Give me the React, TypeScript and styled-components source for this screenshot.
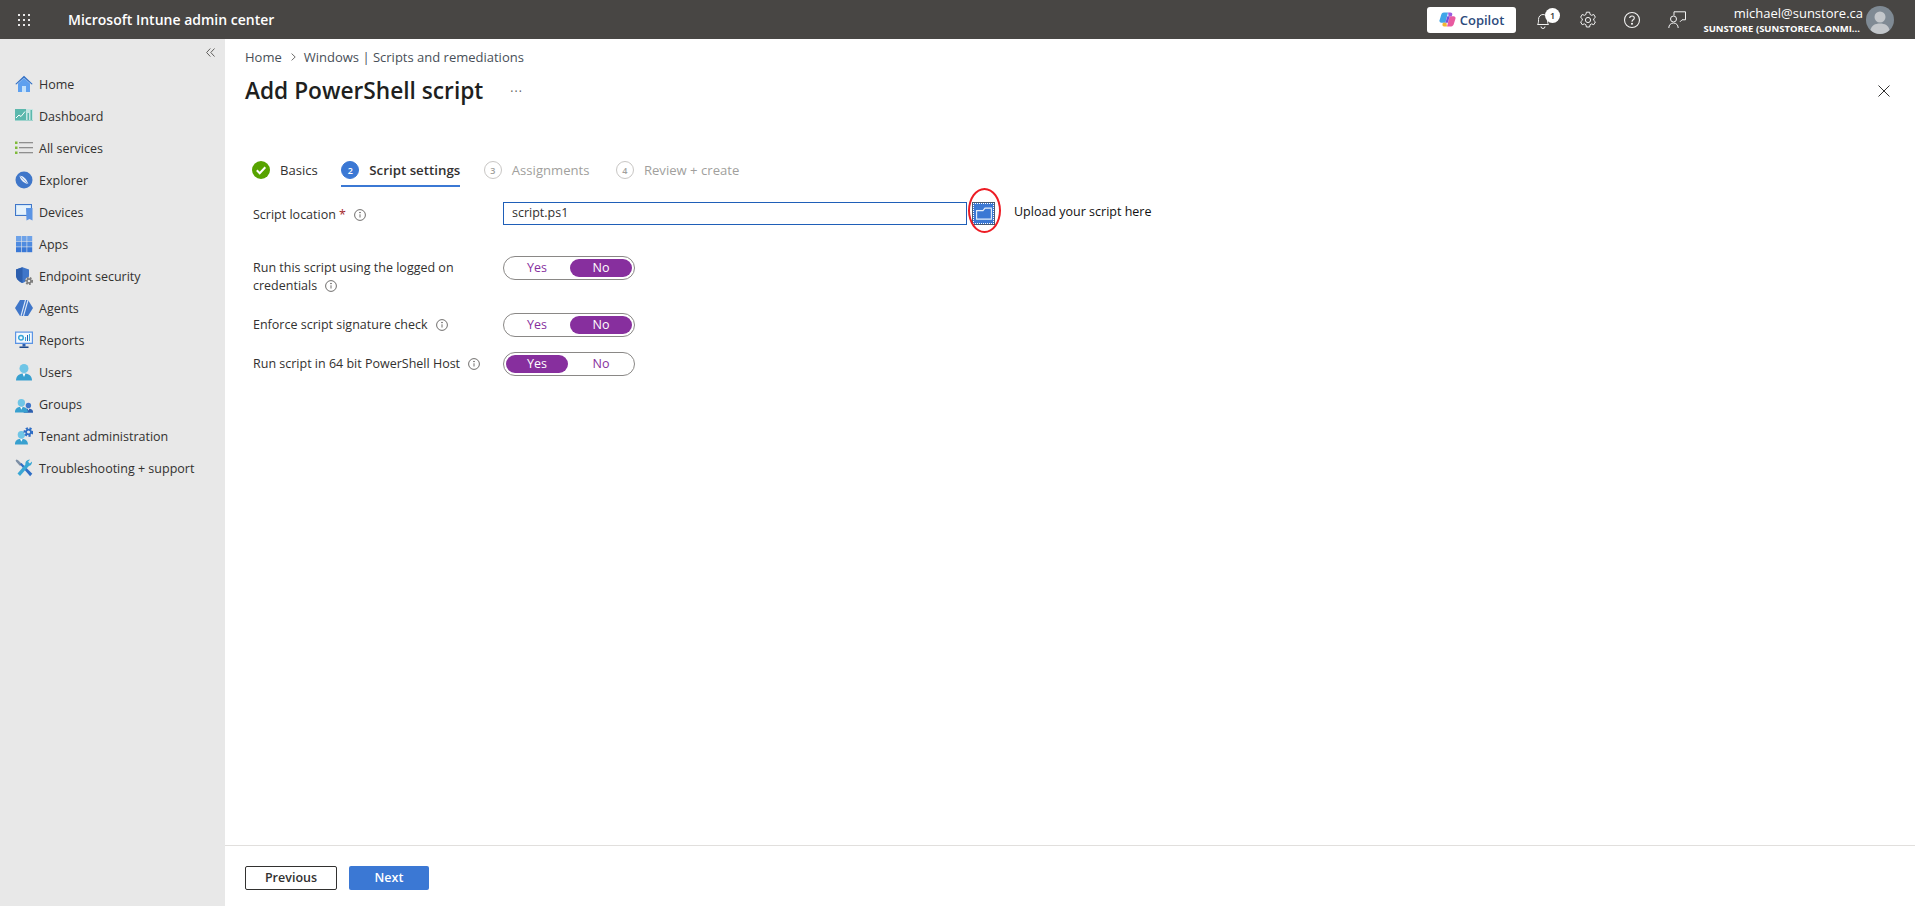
import React from "react";
import styled, { createGlobalStyle } from "styled-components";

const FONT = `"Open Sans", "Noto Sans", "Liberation Sans", sans-serif`;

const GlobalStyle = createGlobalStyle`
    html, body {
        margin: 0;
        padding: 0;
        background: #ffffff;
    }
    * {
        box-sizing: border-box;
    }
`;

// --- icons ---
const Waffle = () => (
    <svg width="12" height="12" viewBox="0 0 12 12" fill="#e8e8e8">
        {[0, 5, 10].map((y) =>
            [0, 5, 10].map((x) => <rect key={`${x}-${y}`} x={x} y={y} width="2" height="2" />)
        )}
    </svg>
);

const HomeIcon = () => (
    <svg width="18" height="18" viewBox="0 0 18 18">
        <path d="M3 8.500 9 3l6 5.500V17H3z" fill="#5ea0ef" />
        <rect x="7" y="11" width="4" height="6" fill="#c3e1fb" />
        <path d="M.3 9 9 .8 17.700 9l-1 .6L9 2.800 1.300 9.600z" fill="#2f6ec5" />
    </svg>
);

const DashboardIcon = () => (
    <svg width="18" height="18" viewBox="0 0 18 18">
        <rect x="0" y="2" width="18" height="12" fill="#c7e6e3" />
        <rect x="0" y="2" width="11" height="11" fill="#5cb8ad" />
        <path d="M1 11l3-3 2 1.500L10 4.500" stroke="#fff" strokeWidth="1" fill="none" />
        <rect x="12.500" y="6" width="1.500" height="7" fill="#5cb8ad" />
        <rect x="15.500" y="3" width="1.500" height="10" fill="#5cb8ad" />
        <rect x="0" y="13" width="18" height="1" fill="#9fd3cd" />
    </svg>
);

const ServicesIcon = () => (
    <svg width="18" height="18" viewBox="0 0 18 18">
        {[2.500, 7.500, 12.500].map((y) => (
            <React.Fragment key={y}>
                <rect x="0" y={y} width="2.500" height="2.500" fill="#7fba3a" />
                <rect x="4" y={y + 0.500} width="14" height="1.300" fill="#8f8f8f" />
            </React.Fragment>
        ))}
    </svg>
);

const ExplorerIcon = () => (
    <svg width="18" height="18" viewBox="0 0 18 18">
        <circle cx="9" cy="9" r="8.500" fill="#3f76c9" />
        <path d="M4.500 4.800c3-.5 7 2.500 8.800 8.200-3.500-.3-7.800-3-8.800-8.200z" fill="#e6edf7" />
        <path d="M5 5l8 8" stroke="#7fa3dc" strokeWidth=".8" />
    </svg>
);

const DevicesIcon = () => (
    <svg width="18" height="18" viewBox="0 0 18 18">
        <rect x="0.500" y="1.500" width="16" height="11" fill="#cfe6f8" stroke="#3f76c9" />
        <rect x="2" y="3" width="13" height="8" fill="#e6f2fb" />
        <path d="M11 5h6.500v12.500l-3-1.500-3 1.500z" fill="#5b94e4" />
    </svg>
);

const AppsIcon = () => (
    <svg width="18" height="18" viewBox="0 0 18 18">
        {[1, 6.600, 12.200].map((y, r) =>
            [1, 6.600, 12.200].map((x) => (
                <rect
                    key={`${x}-${y}`}
                    x={x}
                    y={y}
                    width="5"
                    height="5"
                    fill={r === 0 ? "#6ea2e8" : r === 1 ? "#4f8be0" : "#3a78d6"}
                />
            ))
        )}
    </svg>
);

const GearBadge = ({ x, y, r, color }: { x: number; y: number; r: number; color: string }) => (
    <g>
        <circle cx={x} cy={y} r={r} fill="none" stroke={color} strokeWidth={r * 0.9} strokeDasharray={`${r * 0.55} ${r * 0.42}`} />
        <circle cx={x} cy={y} r={r * 0.72} fill="none" stroke={color} strokeWidth={r * 0.5} />
    </g>
);

const EndpointIcon = () => (
    <svg width="18" height="18" viewBox="0 0 18 18">
        <path d="M7.500.2 1 2.500V8c0 4 2.800 6.500 6.500 8 3.700-1.500 6.500-4 6.500-8V2.500z" fill="#3f76c9" />
        <path d="M7.500.2V16C3.800 14.500 1 12 1 8V2.500z" fill="#2d5fae" />
        <circle cx="14" cy="14" r="3.800" fill="#e8e8e8" />
        <GearBadge x={14} y={14} r={2.800} color="#7d7d7d" />
    </svg>
);

const AgentsIcon = () => (
    <svg width="18" height="18" viewBox="0 0 18 18">
        <path d="M5 1h8l5 8-5 8H5L0 9z" fill="#3f76c9" />
        <path d="M10.500 1 6 17M13 1 8.500 17" stroke="#dce8f8" strokeWidth="1.100" />
    </svg>
);

const ReportsIcon = () => (
    <svg width="18" height="18" viewBox="0 0 18 18">
        <rect x="0" y="0.500" width="18" height="12.500" fill="#5b94e4" />
        <rect x="1.200" y="1.700" width="15.600" height="10" fill="#f3f8fd" />
        <circle cx="6" cy="6.700" r="2.300" fill="none" stroke="#39a6d8" strokeWidth="1.500" />
        <rect x="10" y="6" width="1" height="4" fill="#39a6d8" />
        <rect x="12" y="4" width="1" height="6" fill="#2d5fae" />
        <rect x="14" y="3" width="1" height="7" fill="#39a6d8" />
        <rect x="7.500" y="13" width="3" height="2.500" fill="#2d5fae" />
        <rect x="4.500" y="15.500" width="9" height="1.500" fill="#1f4a8c" />
    </svg>
);

const PersonShape = ({ dx = 0, s = 1, a = "#6fc5e6", b = "#38a0cf" }: { dx?: number; s?: number; a?: string; b?: string }) => (
    <g transform={`translate(${dx} ${18 - 18 * s}) scale(${s})`}>
        <circle cx="9" cy="5.500" r="4.500" fill={a} />
        <path d="M1 17.500c0-4.500 3.200-7 8-7s8 2.500 8 7z" fill={b} />
        <path d="M7.500 10.600h3L9 14z" fill="#ffffff" />
    </g>
);

const UsersIcon = () => (
    <svg width="18" height="18" viewBox="0 0 18 18">
        <PersonShape />
    </svg>
);

const GroupsIcon = () => (
    <svg width="18" height="18" viewBox="0 0 18 18">
        <PersonShape dx={8} s={0.6} a="#3f76c9" b="#2d5fae" />
        <PersonShape dx={-1} s={0.82} />
    </svg>
);

const TenantIcon = () => (
    <svg width="18" height="18" viewBox="0 0 18 18">
        <PersonShape dx={-1} s={0.82} />
        <circle cx="13.500" cy="5" r="4.500" fill="#e8e8e8" />
        <GearBadge x={13.500} y={5} r={3.400} color="#2f6ec5" />
    </svg>
);

const ToolsIcon = () => (
    <svg width="18" height="18" viewBox="0 0 18 18">
        <path d="M5 7 1.200 2.800.6 1.300 1.600.5l1.500.7L7 5z" fill="#7d8fa5" />
        <path d="M5 5.500 6.500 4l10.800 10.800-2.200 2.500z" fill="#2f6ec5" />
        <path d="M2.500 14.500 5 17 13.800 7 11.300 4.500z" fill="#3aa7d4" />
        <path d="M10.500 5.500c-.6-2.600 1.300-4.900 4.600-5l-2 2.300 1.700 1.700L17 2.500c.2 3.200-2.300 5.200-5 4.600z" fill="#3aa7d4" />
    </svg>
);

const BellIcon = () => (
    <svg width="16" height="18" viewBox="0 0 16 18" fill="none" stroke="#f2f2f2" strokeWidth="1">
        <path d="M2.500 13.500c1-1.300 1-2.500 1-5 0-3 2-5 4.500-5s4.500 2 4.500 5c0 2.500 0 3.700 1 5z" />
        <path d="M6 15.500a2 2 0 0 0 4 0" />
    </svg>
);

const GearIcon = () => (
    <svg width="18" height="18" viewBox="0 0 18 18" fill="none" stroke="#f2f2f2" strokeWidth="1">
        <path d="M7.400 1.200h3.200l.5 2.300 1.500.8 2.200-.8 1.600 2.800-1.700 1.500v1.500l1.700 1.600-1.600 2.800-2.200-.8-1.500.8-.5 2.300H7.400l-.5-2.300-1.500-.8-2.200.8-1.600-2.800 1.700-1.600V7.800L1.600 6.300l1.600-2.800 2.200.8 1.500-.8z" />
        <circle cx="9" cy="9" r="2.600" />
    </svg>
);

const HelpIcon = () => (
    <svg width="18" height="18" viewBox="0 0 18 18" fill="none" stroke="#f2f2f2" strokeWidth="1.100">
        <circle cx="9" cy="9" r="7.500" />
        <path d="M6.700 7.100c0-1.300 1-2.100 2.300-2.100s2.300.9 2.300 2c0 1.900-2.300 1.700-2.300 3.700" />
        <circle cx="9" cy="12.800" r=".5" fill="#f2f2f2" />
    </svg>
);

const FeedbackIcon = () => (
    <svg width="18" height="18" viewBox="0 0 18 18" fill="none" stroke="#f2f2f2" strokeWidth="1">
        <path d="M6 4.500V.8h11.500v8h-3.500l-2 2" />
        <circle cx="5.500" cy="8" r="3" />
        <path d="M.8 17c0-3 2-5 4.700-5s4.700 2 4.700 5" />
    </svg>
);

const CopilotLogo = () => (
    <svg width="17" height="17" viewBox="0 0 16 16">
        <path d="M4.500 1.500h4L6 11H2.200C1 11 .2 10 .5 8.800l1.600-5.300C2.500 2.300 3.400 1.500 4.500 1.500z" fill="#3fa5e8" />
        <path d="M11.500 14.500h-4l2.500-9.500h3.800c1.200 0 2 1 1.700 2.200l-1.600 5.300c-.4 1.200-1.300 2-2.400 2z" fill="#e85aa0" />
        <path d="M8.500 1.500h2.200c1.200 0 2 .9 1.800 2L12 5H9z" fill="#9a5ce0" />
        <path d="M7.500 14.500H4.800c-1.200 0-1.800-1-1.500-2l.4-1.500H7z" fill="#f2b632" />
        <path d="M6 11l1.800-6h2.300L8.300 11z" fill="#7b4fd6" />
    </svg>
);

const AvatarIcon = () => (
    <svg width="28" height="28" viewBox="0 0 28 28">
        <circle cx="14" cy="14" r="14" fill="#7f8a94" />
        <circle cx="14" cy="11" r="5.500" fill="#c3c7cb" />
        <path d="M4.500 24c1-4.500 4.500-6.500 9.500-6.500s8.500 2 9.500 6.500c-2.500 2.500-6 4-9.500 4s-7-1.500-9.500-4z" fill="#c3c7cb" />
    </svg>
);

const InfoIcon = () => (
    <InfoSvg width="12" height="12" viewBox="0 0 12 12" fill="none" stroke="#605e5c" strokeWidth=".9">
        <circle cx="6" cy="6" r="5.400" />
        <path d="M6 5.300v3.200" />
        <circle cx="6" cy="3.600" r=".4" fill="#605e5c" />
    </InfoSvg>
);

const CheckBadge = () => (
    <svg width="18" height="18" viewBox="0 0 18 18">
        <circle cx="9" cy="9" r="9" fill="#57a300" />
        <path d="M4.800 9.300 7.700 12.200 13.300 6.200" stroke="#fff" strokeWidth="2" fill="none" />
    </svg>
);

const FolderIcon = () => (
    <svg width="16" height="13" viewBox="0 0 16 13" fill="none" stroke="#e4eefb" strokeWidth="1.100">
        <path d="M.6 3.600h6.400l2-2.500h6.400v11H.6z" />
    </svg>
);

const CloseIcon = () => (
    <svg width="12" height="12" viewBox="0 0 12 12" stroke="#323130" strokeWidth="1">
        <path d="M.5.500l11 11M11.500.500l-11 11" />
    </svg>
);

const ChevronsIcon = () => (
    <svg width="9" height="9" viewBox="0 0 9 9" fill="none" stroke="#605e5c" strokeWidth="1">
        <path d="M4.300.5.600 4.500l3.700 4M8.500.5 4.800 4.500l3.700 4" />
    </svg>
);

const CrumbChevron = () => (
    <svg width="5" height="8" viewBox="0 0 5 8" fill="none" stroke="#605e5c" strokeWidth=".9">
        <path d="M.6.6 4.200 4 .6 7.400" />
    </svg>
);

const NAV_ITEMS: { label: string; icon: React.ReactNode }[] = [
    { label: "Home", icon: <HomeIcon /> },
    { label: "Dashboard", icon: <DashboardIcon /> },
    { label: "All services", icon: <ServicesIcon /> },
    { label: "Explorer", icon: <ExplorerIcon /> },
    { label: "Devices", icon: <DevicesIcon /> },
    { label: "Apps", icon: <AppsIcon /> },
    { label: "Endpoint security", icon: <EndpointIcon /> },
    { label: "Agents", icon: <AgentsIcon /> },
    { label: "Reports", icon: <ReportsIcon /> },
    { label: "Users", icon: <UsersIcon /> },
    { label: "Groups", icon: <GroupsIcon /> },
    { label: "Tenant administration", icon: <TenantIcon /> },
    { label: "Troubleshooting + support", icon: <ToolsIcon /> },
];

const Toggle: React.FC<{ value: "Yes" | "No" }> = ({ value }) => (
    <ToggleBox>
        <ToggleOption $on={value === "Yes"}>Yes</ToggleOption>
        <ToggleOption $on={value === "No"}>No</ToggleOption>
    </ToggleBox>
);

export default function App() {
    return (
        <Page>
            <GlobalStyle />
            <TopBar>
                <WaffleButton>
                    <Waffle />
                </WaffleButton>
                <BrandName>Microsoft Intune admin center</BrandName>
                <TopRight>
                    <CopilotButton>
                        <CopilotLogo />
                        Copilot
                    </CopilotButton>
                    <TopIconButton>
                        <BellIcon />
                        <NoticeBadge>1</NoticeBadge>
                    </TopIconButton>
                    <TopIconButton>
                        <GearIcon />
                    </TopIconButton>
                    <TopIconButton>
                        <HelpIcon />
                    </TopIconButton>
                    <TopIconButton>
                        <FeedbackIcon />
                    </TopIconButton>
                    <Account>
                        <AccountMail>michael@sunstore.ca</AccountMail>
                        <AccountTenant>SUNSTORE (SUNSTORECA.ONMI...</AccountTenant>
                    </Account>
                    <AvatarIcon />
                </TopRight>
            </TopBar>
            <Body>
                <Sidebar>
                    <CollapseRow>
                        <ChevronsIcon />
                    </CollapseRow>
                    {NAV_ITEMS.map((item) => (
                        <NavItem key={item.label}>
                            {item.icon}
                            {item.label}
                        </NavItem>
                    ))}
                </Sidebar>
                <Main>
                    <Content>
                        <Breadcrumb>
                            Home
                            <CrumbGap>
                                <CrumbChevron />
                            </CrumbGap>
                            Windows | Scripts and remediations
                        </Breadcrumb>
                        <TitleRow>
                            <Title>Add PowerShell script</Title>
                            <MoreDots>···</MoreDots>
                            <CloseButton>
                                <CloseIcon />
                            </CloseButton>
                        </TitleRow>
                        <Tabs>
                            <Tab>
                                <CheckBadge />
                                Basics
                            </Tab>
                            <Tab $active>
                                <StepNumber $active>2</StepNumber>
                                Script settings
                            </Tab>
                            <Tab $disabled>
                                <StepNumber>3</StepNumber>
                                Assignments
                            </Tab>
                            <Tab $disabled $pushed>
                                <StepNumber>4</StepNumber>
                                Review + create
                            </Tab>
                        </Tabs>
                        <Form>
                            <FormRow $gapBelow={15}>
                                <FieldLabel $nudged>
                                    Script location <Required>*</Required>
                                    <InfoSlot>
                                        <InfoIcon />
                                    </InfoSlot>
                                </FieldLabel>
                                <FileRow>
                                    <FileInput>script.ps1</FileInput>
                                    <FolderSpot>
                                        <FolderButton>
                                            <FolderIcon />
                                        </FolderButton>
                                        <RedCircle />
                                    </FolderSpot>
                                    <UploadNote>Upload your script here</UploadNote>
                                </FileRow>
                            </FormRow>
                            <FormRow>
                                <FieldLabel>
                                    Run this script using the logged on credentials
                                    <InfoSlot>
                                        <InfoIcon />
                                    </InfoSlot>
                                </FieldLabel>
                                <Toggle value="No" />
                            </FormRow>
                            <FormRow>
                                <FieldLabel>
                                    Enforce script signature check
                                    <InfoSlot>
                                        <InfoIcon />
                                    </InfoSlot>
                                </FieldLabel>
                                <Toggle value="No" />
                            </FormRow>
                            <FormRow>
                                <FieldLabel>
                                    Run script in 64 bit PowerShell Host
                                    <InfoSlot>
                                        <InfoIcon />
                                    </InfoSlot>
                                </FieldLabel>
                                <Toggle value="Yes" />
                            </FormRow>
                        </Form>
                    </Content>
                    <Footer>
                        <PreviousButton>Previous</PreviousButton>
                        <NextButton>Next</NextButton>
                    </Footer>
                </Main>
            </Body>
        </Page>
    );
}

// --- styles ---
const Page = styled.div`
    display: flex;
    flex-direction: column;
    height: 906px;
    overflow: hidden;
    font-family: ${FONT};
    font-size: 12.5px;
    color: #323130;
`;

const TopBar = styled.header`
    display: flex;
    align-items: center;
    flex: 0 0 39px;
    padding-right: 21px;
    background: #484644;
    color: #ffffff;
`;

const WaffleButton = styled.div`
    display: flex;
    align-items: center;
    justify-content: center;
    width: 48px;
`;

const BrandName = styled.div`
    margin-left: 20px;
    font-size: 14px;
    font-weight: 600;
`;

const TopRight = styled.div`
    display: flex;
    align-items: center;
    margin-left: auto;
`;

const CopilotButton = styled.div`
    display: flex;
    align-items: center;
    justify-content: center;
    gap: 4px;
    width: 89px;
    height: 26px;
    margin-right: 5px;
    border-radius: 3px;
    background: #ffffff;
    color: #2c4a7c;
    font-size: 13px;
    font-weight: 600;
`;

const TopIconButton = styled.div`
    position: relative;
    display: flex;
    align-items: center;
    justify-content: center;
    width: 44.5px;
    height: 39px;
`;

const NoticeBadge = styled.span`
    position: absolute;
    top: 8px;
    left: 24px;
    width: 15px;
    height: 15px;
    border-radius: 50%;
    background: #ffffff;
    color: #323130;
    font-size: 9px;
    font-weight: 600;
    line-height: 15px;
    text-align: center;
`;

const Account = styled.div`
    display: flex;
    flex-direction: column;
    align-items: flex-end;
    width: 164px;
    margin-right: 3px;
    padding-top: 2px;
`;

const AccountMail = styled.div`
    font-size: 13px;
    line-height: 17px;
    color: #ffffff;
`;

const AccountTenant = styled.div`
    padding-right: 3px;
    font-size: 9.5px;
    font-weight: 700;
    line-height: 14px;
    color: #ffffff;
    white-space: nowrap;
`;

const Body = styled.div`
    display: flex;
    flex: 1;
    min-height: 0;
`;

const Sidebar = styled.nav`
    flex: 0 0 225px;
    background: #e8e8e8;
`;

const CollapseRow = styled.div`
    display: flex;
    align-items: center;
    justify-content: flex-end;
    height: 29px;
    padding: 0 10px 2px 0;
`;

const NavItem = styled.div`
    display: flex;
    align-items: center;
    gap: 6px;
    height: 32px;
    padding-left: 15px;
    color: #323130;
    white-space: nowrap;
`;

const Main = styled.main`
    display: flex;
    flex: 1;
    flex-direction: column;
    min-width: 0;
`;

const Content = styled.div`
    flex: 1;
    padding: 9px 25px 0 20px;
`;

const Breadcrumb = styled.div`
    display: flex;
    align-items: center;
    height: 18px;
    font-size: 13px;
    color: #484f58;
`;

const CrumbGap = styled.span`
    display: flex;
    margin: 0 8px 0 9px;
`;

const TitleRow = styled.div`
    display: flex;
    align-items: center;
    height: 28px;
    margin-top: 11px;
`;

const Title = styled.h1`
    margin: 0;
    font-size: 22.7px;
    font-weight: 600;
    line-height: 28px;
    color: #201f1e;
`;

const MoreDots = styled.span`
    margin-left: 27px;
    font-size: 12px;
    letter-spacing: 1px;
    color: #605e5c;
`;

const CloseButton = styled.span`
    display: flex;
    margin-left: auto;
`;

const Tabs = styled.div`
    display: flex;
    gap: 23.5px;
    margin: 48px 0 15px 7px;
`;

const Tab = styled.div<{ $active?: boolean; $disabled?: boolean; $pushed?: boolean }>`
    display: flex;
    align-items: center;
    gap: 10px;
    height: 34px;
    margin-left: ${(p) => (p.$pushed ? 3 : 0)}px;
    border-top: 2px solid transparent;
    border-bottom: 2px solid ${(p) => (p.$active ? "#3b78d4" : "transparent")};
    color: ${(p) => (p.$disabled ? "#a19f9d" : "#323130")};
    font-size: ${(p) => (p.$active ? 13.3 : 13.1)}px;
    font-weight: ${(p) => (p.$active ? 600 : 400)};
    white-space: nowrap;
`;

const StepNumber = styled.span<{ $active?: boolean }>`
    display: flex;
    align-items: center;
    justify-content: center;
    width: 18px;
    height: 18px;
    border: 1px solid ${(p) => (p.$active ? "#3b78d4" : "#c8c6c4")};
    border-radius: 50%;
    background: ${(p) => (p.$active ? "#3b78d4" : "#ffffff")};
    color: ${(p) => (p.$active ? "#ffffff" : "#a19f9d")};
    font-size: 9px;
    font-weight: 600;
`;

const Form = styled.div`
    display: flex;
    flex-direction: column;
    gap: 15px;
    margin-left: 8px;
`;

const FormRow = styled.div<{ $gapBelow?: number }>`
    display: grid;
    grid-template-columns: 250px 1fr;
    align-items: start;
    margin-bottom: ${(p) => p.$gapBelow ?? 0}px;
`;

const FieldLabel = styled.div<{ $nudged?: boolean }>`
    width: 240px;
    padding: ${(p) => (p.$nudged ? "4px 0 2px" : "3px 0")};
    line-height: 18px;
    color: #323130;
`;

const Required = styled.span`
    color: #a4262c;
`;

const InfoSlot = styled.span`
    display: inline-block;
    height: 12px;
    margin-left: 8px;
    vertical-align: -2px;
`;

const InfoSvg = styled.svg`
    display: block;
`;

const FileRow = styled.div`
    display: flex;
    align-items: flex-start;
`;

const FileInput = styled.div`
    width: 464px;
    height: 23px;
    padding-left: 8px;
    border: 1px solid #1f5fb8;
    font-size: 12.5px;
    line-height: 20px;
    color: #323130;
`;

const FolderSpot = styled.div`
    position: relative;
    margin-left: 5px;
`;

const FolderButton = styled.div`
    display: flex;
    align-items: center;
    justify-content: center;
    width: 23px;
    height: 23px;
    background: #3b78d4;
    outline: 1px dotted #ffffff;
    outline-offset: -2px;
    border: 1px solid #4a5a70;
`;

const RedCircle = styled.div`
    position: absolute;
    top: -14px;
    left: -4px;
    width: 33px;
    height: 45px;
    border: 2.5px solid #ed1c24;
    border-radius: 50%;
`;

const UploadNote = styled.div`
    margin-left: 19px;
    padding-top: 1px;
    line-height: 18px;
    color: #111111;
    white-space: nowrap;
`;

const ToggleBox = styled.div`
    display: flex;
    gap: 2px;
    width: 132px;
    height: 24px;
    padding: 2px;
    border: 1px solid #8a8886;
    border-radius: 12px;
    background: #ffffff;
`;

const ToggleOption = styled.div<{ $on: boolean }>`
    flex: 1;
    height: 18px;
    border-radius: 9px;
    background: ${(p) => (p.$on ? "#872f9e" : "transparent")};
    color: ${(p) => (p.$on ? "#ffffff" : "#872f9e")};
    line-height: 18px;
    text-align: center;
`;

const Footer = styled.footer`
    display: flex;
    gap: 12px;
    flex: 0 0 61px;
    padding: 20px 20px 0;
    border-top: 1px solid #e1dfdd;
`;

const PreviousButton = styled.div`
    width: 92px;
    height: 24px;
    border: 1px solid #323130;
    border-radius: 2px;
    font-weight: 600;
    line-height: 22px;
    text-align: center;
    color: #323130;
`;

const NextButton = styled.div`
    width: 80px;
    height: 24px;
    border-radius: 2px;
    background: #3b78d4;
    color: #ffffff;
    font-weight: 600;
    line-height: 24px;
    text-align: center;
`;
